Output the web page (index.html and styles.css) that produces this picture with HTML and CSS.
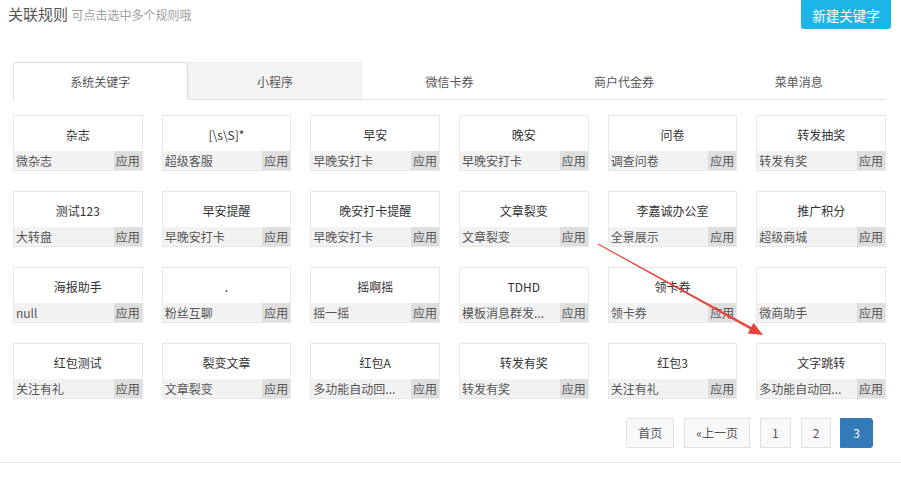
FILE: index.html
```html
<!DOCTYPE html>
<html lang="zh-CN">
    <head>
        <meta charset="UTF-8" />
        <meta name="viewport" content="width=device-width, initial-scale=1.0" />
        <title>关联规则</title>
        <link rel="stylesheet" href="styles.css">
    </head>
    <body>
        <div id="page">
            <div class="header">
                <h1 class="title">关联规则 <small>可点击选中多个规则哦</small></h1>
                <button class="btnNew">新建关键字</button>
            </div>

            <ul class="tabs">
                <li class="active">系统关键字</li>
                <li class="hover">小程序</li>
                <li>微信卡券</li>
                <li>商户代金券</li>
                <li>菜单消息</li>
            </ul>

            <div class="rules">
                <div class="rule"><p class="name">杂志</p><div class="foot"><span>微杂志</span><b>应用</b></div></div>
                <div class="rule"><p class="name">[\s\S]*</p><div class="foot"><span>超级客服</span><b>应用</b></div></div>
                <div class="rule"><p class="name">早安</p><div class="foot"><span>早晚安打卡</span><b>应用</b></div></div>
                <div class="rule"><p class="name">晚安</p><div class="foot"><span>早晚安打卡</span><b>应用</b></div></div>
                <div class="rule"><p class="name">问卷</p><div class="foot"><span>调查问卷</span><b>应用</b></div></div>
                <div class="rule"><p class="name">转发抽奖</p><div class="foot"><span>转发有奖</span><b>应用</b></div></div>

                <div class="rule"><p class="name">测试123</p><div class="foot"><span>大转盘</span><b>应用</b></div></div>
                <div class="rule"><p class="name">早安提醒</p><div class="foot"><span>早晚安打卡</span><b>应用</b></div></div>
                <div class="rule"><p class="name">晚安打卡提醒</p><div class="foot"><span>早晚安打卡</span><b>应用</b></div></div>
                <div class="rule"><p class="name">文章裂变</p><div class="foot"><span>文章裂变</span><b>应用</b></div></div>
                <div class="rule"><p class="name">李嘉诚办公室</p><div class="foot"><span>全景展示</span><b>应用</b></div></div>
                <div class="rule"><p class="name">推广积分</p><div class="foot"><span>超级商城</span><b>应用</b></div></div>

                <div class="rule"><p class="name">海报助手</p><div class="foot"><span>null</span><b>应用</b></div></div>
                <div class="rule"><p class="name">.</p><div class="foot"><span>粉丝互聊</span><b>应用</b></div></div>
                <div class="rule"><p class="name">摇啊摇</p><div class="foot"><span>摇一摇</span><b>应用</b></div></div>
                <div class="rule"><p class="name">TDHD</p><div class="foot"><span>模板消息群发...</span><b>应用</b></div></div>
                <div class="rule"><p class="name">领卡券</p><div class="foot"><span>领卡券</span><b>应用</b></div></div>
                <div class="rule"><p class="name"></p><div class="foot"><span>微商助手</span><b>应用</b></div></div>

                <div class="rule"><p class="name">红包测试</p><div class="foot"><span>关注有礼</span><b>应用</b></div></div>
                <div class="rule"><p class="name">裂变文章</p><div class="foot"><span>文章裂变</span><b>应用</b></div></div>
                <div class="rule"><p class="name">红包A</p><div class="foot"><span>多功能自动回...</span><b>应用</b></div></div>
                <div class="rule"><p class="name">转发有奖</p><div class="foot"><span>转发有奖</span><b>应用</b></div></div>
                <div class="rule"><p class="name">红包3</p><div class="foot"><span>关注有礼</span><b>应用</b></div></div>
                <div class="rule"><p class="name">文字跳转</p><div class="foot"><span>多功能自动回...</span><b>应用</b></div></div>
            </div>

            <div class="pager">
                <a>首页</a>
                <a>«上一页</a>
                <a>1</a>
                <a>2</a>
                <a class="current">3</a>
            </div>

            <div class="bottomLine"></div>

            <!-- annotation arrow drawn over the page -->
            <svg class="arrow" width="901" height="483" viewBox="0 0 901 483">
                <polygon fill="#e8423a" points="598.24,243.56 751.3,327.1 753.6,322.9 763,335 747.8,333.5 750.1,329.3 597.76,244.44" />
            </svg>
        </div>
    </body>
</html>
```

FILE: styles.css
```css
* {
    margin: 0;
    padding: 0;
    box-sizing: border-box;
}
html,
body {
    width: 100%;
    height: 100%;
    background-color: white;
}
body {
    font-family: "Noto Sans CJK SC", "Liberation Sans", sans-serif;
    font-size: 12px;
    color: #555;
}
#page {
    position: relative;
    width: 901px;
    height: 483px;
    overflow: hidden;
}
.header {
    display: flex;
    justify-content: space-between;
    align-items: flex-start;
    padding: 0 10px 0 8px;
    height: 29px;
    .title {
        font-size: 15px;
        font-weight: normal;
        color: #555;
        line-height: 28px;
        small {
            font-size: 12px;
            color: #a0a0a0;
        }
    }
}
.btnNew {
    width: 90px;
    height: 29px;
    border: none;
    border-radius: 0 0 3px 3px;
    background-color: #1cb5e8;
    color: white;
    font-family: inherit;
    font-size: 13.5px;
}
.tabs {
    list-style: none;
    display: grid;
    grid-template-columns: repeat(5, 1fr);
    margin: 33px 15px 0 13px;
    border-bottom: 1px solid #e3e3e3;
    & > li {
        height: 38px;
        line-height: 37px;
        text-align: center;
        border: 1px solid transparent;
        border-bottom: none;
        margin-bottom: -1px;
        color: #555;
    }
    & > li.active {
        background-color: white;
        border-color: #e0e0e0;
        border-bottom: 1px solid white;
        border-radius: 3px 3px 0 0;
    }
    & > li.hover {
        background-color: #f4f4f4;
        border-color: #ececec;
        border-bottom: 1px solid #e3e3e3;
    }
}
.rules {
    display: grid;
    grid-template-columns: repeat(6, 1fr);
    column-gap: 19px;
    row-gap: 20px;
    margin: 15px 15px 0 13px;
}
.rule {
    height: 56px;
    border: 1px solid #e8e8e8;
    .name {
        height: 35px;
        padding-top: 2px;
        line-height: 33px;
        text-align: center;
        color: #333;
    }
    .foot {
        display: flex;
        justify-content: space-between;
        height: 19px;
        line-height: 19px;
        background-color: #f2f2f2;
        span {
            padding-left: 2px;
            color: #555;
            white-space: nowrap;
        }
        b {
            font-weight: normal;
            padding: 0 2px;
            background-color: #dedede;
            color: #555;
        }
    }
}
.pager {
    display: flex;
    justify-content: flex-end;
    gap: 10px;
    margin: 19px 28px 0 0;
    a {
        height: 30px;
        line-height: 28px;
        padding: 0 11px;
        border: 1px solid #e0e0e0;
        background-color: #f9f9f9;
        color: #555;
    }
    a:first-child {
        border-radius: 3px 0 0 3px;
    }
    a.current {
        margin-left: -1px;
        padding: 0 12px;
        background-color: #337ab7;
        border-color: #337ab7;
        color: white;
        border-radius: 0 3px 3px 0;
    }
}
.bottomLine {
    margin-top: 14px;
    border-top: 1px solid #e6e6e6;
}
.arrow {
    position: absolute;
    top: 0;
    left: 0;
    pointer-events: none;
}
```
